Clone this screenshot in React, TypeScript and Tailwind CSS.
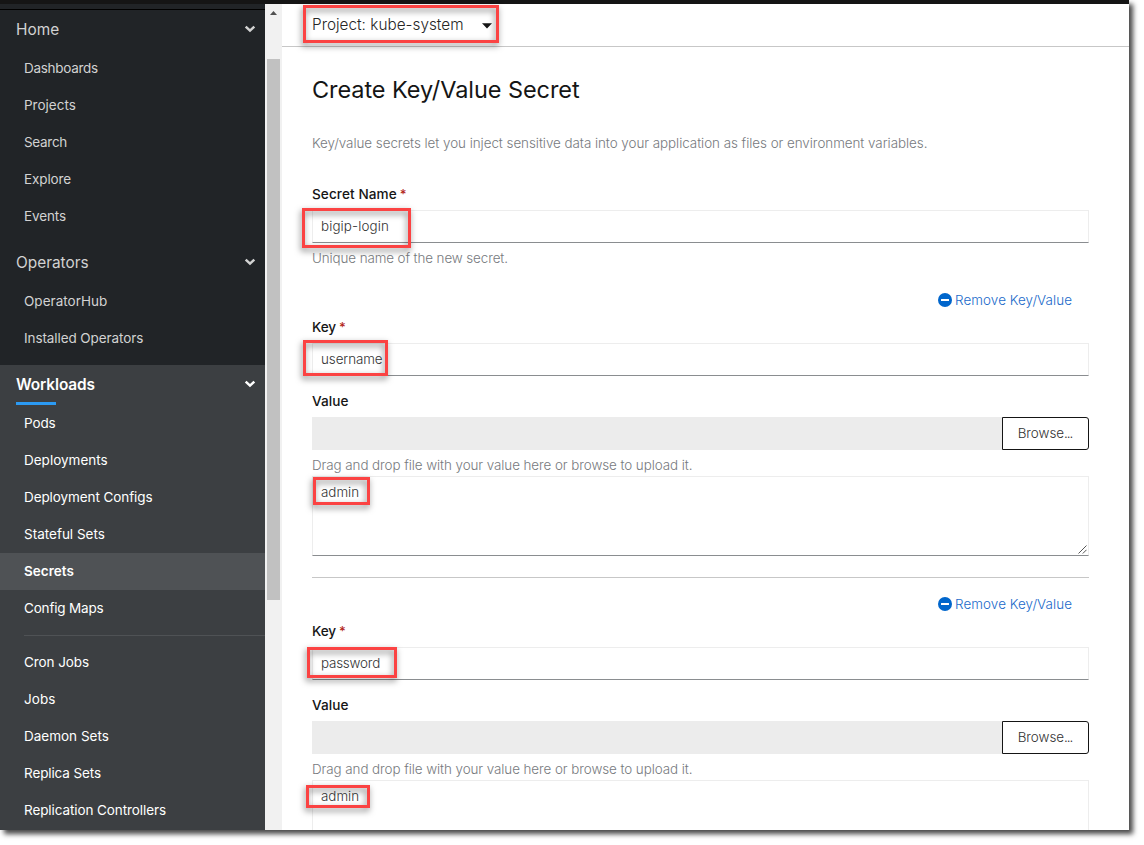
import React from "react";

type Item = { label: string; track: string; active?: boolean };

const home: Item[] = [
  { label: "Dashboards", track: "tracking-[-0.28px]" },
  { label: "Projects", track: "tracking-[0px]" },
  { label: "Search", track: "tracking-[-0.3px]" },
  { label: "Explore", track: "tracking-[-0.12px]" },
  { label: "Events", track: "tracking-[-0.12px]" },
];

const operators: Item[] = [
  { label: "OperatorHub", track: "tracking-[0.03px]" },
  { label: "Installed Operators", track: "tracking-[-0.09px]" },
];

const workloads: Item[] = [
  { label: "Pods", track: "tracking-[-0.13px]" },
  { label: "Deployments", track: "tracking-[0px]" },
  { label: "Deployment Configs", track: "tracking-[-0.09px]" },
  { label: "Stateful Sets", track: "tracking-[0px]" },
  { label: "Secrets", track: "tracking-[0.04px]", active: true },
  { label: "Config Maps", track: "tracking-[-0.18px]" },
];

const jobs: Item[] = [
  { label: "Cron Jobs", track: "tracking-[-0.09px]" },
  { label: "Jobs", track: "tracking-[0.05px]" },
  { label: "Daemon Sets", track: "tracking-[0px]" },
  { label: "Replica Sets", track: "tracking-[-0.11px]" },
  { label: "Replication Controllers", track: "tracking-[-0.09px]" },
];

function Chevron() {
  return (
    <svg width="12" height="8" viewBox="0 0 12 8" fill="none" className="relative -top-px mr-[9px]">
      <path d="M1.7 1.6 6 5.6 10.3 1.6" stroke="currentColor" strokeWidth="2.5" />
    </svg>
  );
}

function SectionHeader({ label, bold }: { label: string; bold?: boolean }) {
  return (
    <div
      className={
        bold
          ? "relative flex h-10 items-center justify-between pl-4 text-[15.4px] font-semibold tracking-[-0.1px] text-white"
          : "relative flex h-10 items-center justify-between pl-4 text-[15.4px] text-[#d2d2d2]"
      }
    >
      <span>{label}</span>
      <Chevron />
      {bold && <div className="absolute bottom-0 left-4 h-[3px] w-10 bg-[#2b9af3]" />}
    </div>
  );
}

function NavItems({ items, bright }: { items: Item[]; bright?: boolean }) {
  return (
    <ul className={bright ? "text-white" : "text-[#d2d2d2]"}>
      {items.map((i) => (
        <li
          key={i.label}
          className={`flex h-[37px] items-center pl-6 text-[13.5px] ${i.track} ${i.active ? "bg-[#4f5255] font-semibold" : ""}`}
        >
          {i.label}
        </li>
      ))}
    </ul>
  );
}

function Sidebar() {
  return (
    <nav className="flex w-[265px] shrink-0 flex-col bg-[#212427]">
      <div className="h-[6px] shrink-0 border-b border-black" />
      <div className="pb-2">
        <SectionHeader label="Home" />
        <NavItems items={home} />
      </div>
      <div className="pb-2">
        <SectionHeader label="Operators" />
        <NavItems items={operators} />
      </div>
      <div className="grow bg-[#3c3f42]">
        <SectionHeader label="Workloads" bold />
        <NavItems items={workloads} bright />
        <div className="mb-2 ml-6 mt-2 h-px bg-[#4f5255]" />
        <NavItems items={jobs} bright />
      </div>
    </nav>
  );
}

function Scrollbar() {
  return (
    <div className="flex w-[17px] shrink-0 flex-col items-center bg-[#f1f1f1]">
      <svg width="7" height="4" viewBox="0 0 7 4" className="mt-[7px] shrink-0" fill="#505050">
        <path d="M0 4 3.5 0 7 4z" />
      </svg>
      <div className="mr-px mt-[44px] h-[541px] w-[13px] bg-[#c1c1c1]" />
    </div>
  );
}

function Highlight({ box }: { box: string }) {
  return (
    <div
      className={`absolute border-[3px] border-[#fb4343] drop-shadow-[-1px_3px_3px_rgba(0,0,0,0.5)] ${box}`}
    />
  );
}

function Label({ text, required, track }: { text: string; required?: boolean; track: string }) {
  return (
    <div className="flex h-[21px] items-center gap-[3px] text-[13.6px] font-medium text-[#151515]">
      <span className={track}>{text}</span>
      {required && <span className="text-[13px] text-[#b3261a]">*</span>}
    </div>
  );
}

function TextField({ text, track, box }: { text: string; track: string; box: string }) {
  return (
    <div className="relative mt-[5px] flex h-[33px] items-center border border-[#ededed] border-b-[#8a8d90] pl-2 text-[13.4px] font-light text-[#333]">
      <Highlight box={box} />
      <span className={`relative ${track}`}>{text}</span>
    </div>
  );
}

function RemoveLink() {
  return (
    <div className="flex h-[21px] items-center justify-end gap-[3px] pr-[17px] text-[13.4px] font-light text-[#1a6aca]">
      <svg width="14" height="14" viewBox="0 0 14 14" className="mb-px">
        <circle cx="7" cy="7" r="7" fill="#06c" />
        <rect x="3" y="6" width="8" height="2" rx="0.3" fill="#fff" />
      </svg>
      <span className="tracking-[0.08px]">Remove Key/Value</span>
    </div>
  );
}

function Entry({
  name,
  track,
  keyBox,
  valueBox,
}: {
  name: string;
  track: string;
  keyBox: string;
  valueBox: string;
}) {
  return (
    <div>
      <RemoveLink />
      <div className="mt-[6px]">
        <Label text="Key" required track="tracking-[-0.1px]" />
      </div>
      <TextField text={name} track={track} box={keyBox} />
      <div className="mt-[15px]">
        <Label text="Value" track="tracking-[0.05px]" />
      </div>
      <div className="mt-[5px] flex h-[33px]">
        <div className="grow bg-[#ececec]" />
        <div className="flex w-[87px] items-center justify-center rounded-r-[3px] border border-[#151515] pr-px text-[13.4px] font-light text-[#333]">
          <span className="tracking-[-0.05px]">Browse</span>
          <span className="tracking-[-1px]">...</span>
        </div>
      </div>
      <p className="mt-[5px] h-[21px] text-[13.4px] font-light leading-[21px] tracking-[-0.07px] text-[#777a7e]">
        Drag and drop file with your value here or browse to upload it.
      </p>
      <div className="relative h-20 border border-[#ededed] border-b-[#8a8d90] pl-2 pt-[5px] text-[13.4px] font-light leading-[21px] text-[#333]">
        <Highlight box={valueBox} />
        <span className="relative">admin</span>
        <svg
          width="9"
          height="9"
          viewBox="0 0 9 9"
          className="absolute bottom-px right-px"
          stroke="#444"
          strokeWidth="0.9"
        >
          <path d="M0.5 8.5 8.5 0.5M4.8 8.5 8.5 4.8" />
        </svg>
      </div>
    </div>
  );
}

export default function App() {
  return (
    <div className="h-[845px] w-[1144px] overflow-hidden bg-white font-['Inter',sans-serif]">
      <div className="h-[830px] w-[1129px] shadow-[4px_4px_5px_rgba(0,0,0,0.72)]">
        <div className="flex h-full flex-col overflow-hidden bg-white">
          <header className="h-1 shrink-0 bg-[#151515]" />
          <div className="flex min-h-0 grow">
            <Sidebar />
            <Scrollbar />
            <main className="min-w-0 grow">
              <div className="relative flex h-[43px] items-center border-b border-[#c7c7c7] pl-[30px] text-[15.3px] font-light text-[#262626]">
                <Highlight box="left-[21px] top-px h-[38px] w-[196px]" />
                <span className="relative tracking-[0.02px]">Project: kube-system</span>
                <svg width="10" height="6" viewBox="0 0 10 6" className="relative ml-[18.5px] mt-px" fill="#151515">
                  <path d="M0 0.3h10L5 5.6z" />
                </svg>
              </div>
              <div className="pl-[30px] pr-10 pt-[27px]">
                <h1 className="h-8 whitespace-nowrap text-[23.5px] leading-8 tracking-[-0.07px] text-[#151515]">
                  Create Key/Value Secret
                </h1>
                <p className="mt-[27px] h-[21px] whitespace-nowrap text-[13.4px] font-light leading-[21px] tracking-[-0.04px] text-[#777a7e]">
                  Key/value secrets let you inject sensitive data into your application as files or environment variables.
                </p>
                <div className="mt-[30px]">
                  <Label text="Secret Name" required track="tracking-[0.08px]" />
                </div>
                <TextField
                  text="bigip-login"
                  track="tracking-[0.12px]"
                  box="left-[-11px] top-[-3px] h-10 w-[109px]"
                />
                <p className="mt-[5px] h-[21px] text-[13.4px] font-light leading-[21px] tracking-[-0.1px] text-[#777a7e]">
                  Unique name of the new secret.
                </p>
                <div className="mt-[21px]">
                  <Entry
                    name="username"
                    track="tracking-[-0.08px]"
                    keyBox="left-[-10px] top-[-4px] h-9 w-[85px]"
                    valueBox="left-0 top-0 h-7 w-[57px]"
                  />
                </div>
                <div className="mt-[21px] h-px bg-[#c7c7c7]" />
                <div className="mt-4">
                  <Entry
                    name="password"
                    track="tracking-[-0.2px]"
                    keyBox="left-[-6px] top-[-1px] h-[31px] w-[90px]"
                    valueBox="left-[-7px] top-1 h-[23px] w-16"
                  />
                </div>
              </div>
            </main>
          </div>
        </div>
      </div>
    </div>
  );
}
